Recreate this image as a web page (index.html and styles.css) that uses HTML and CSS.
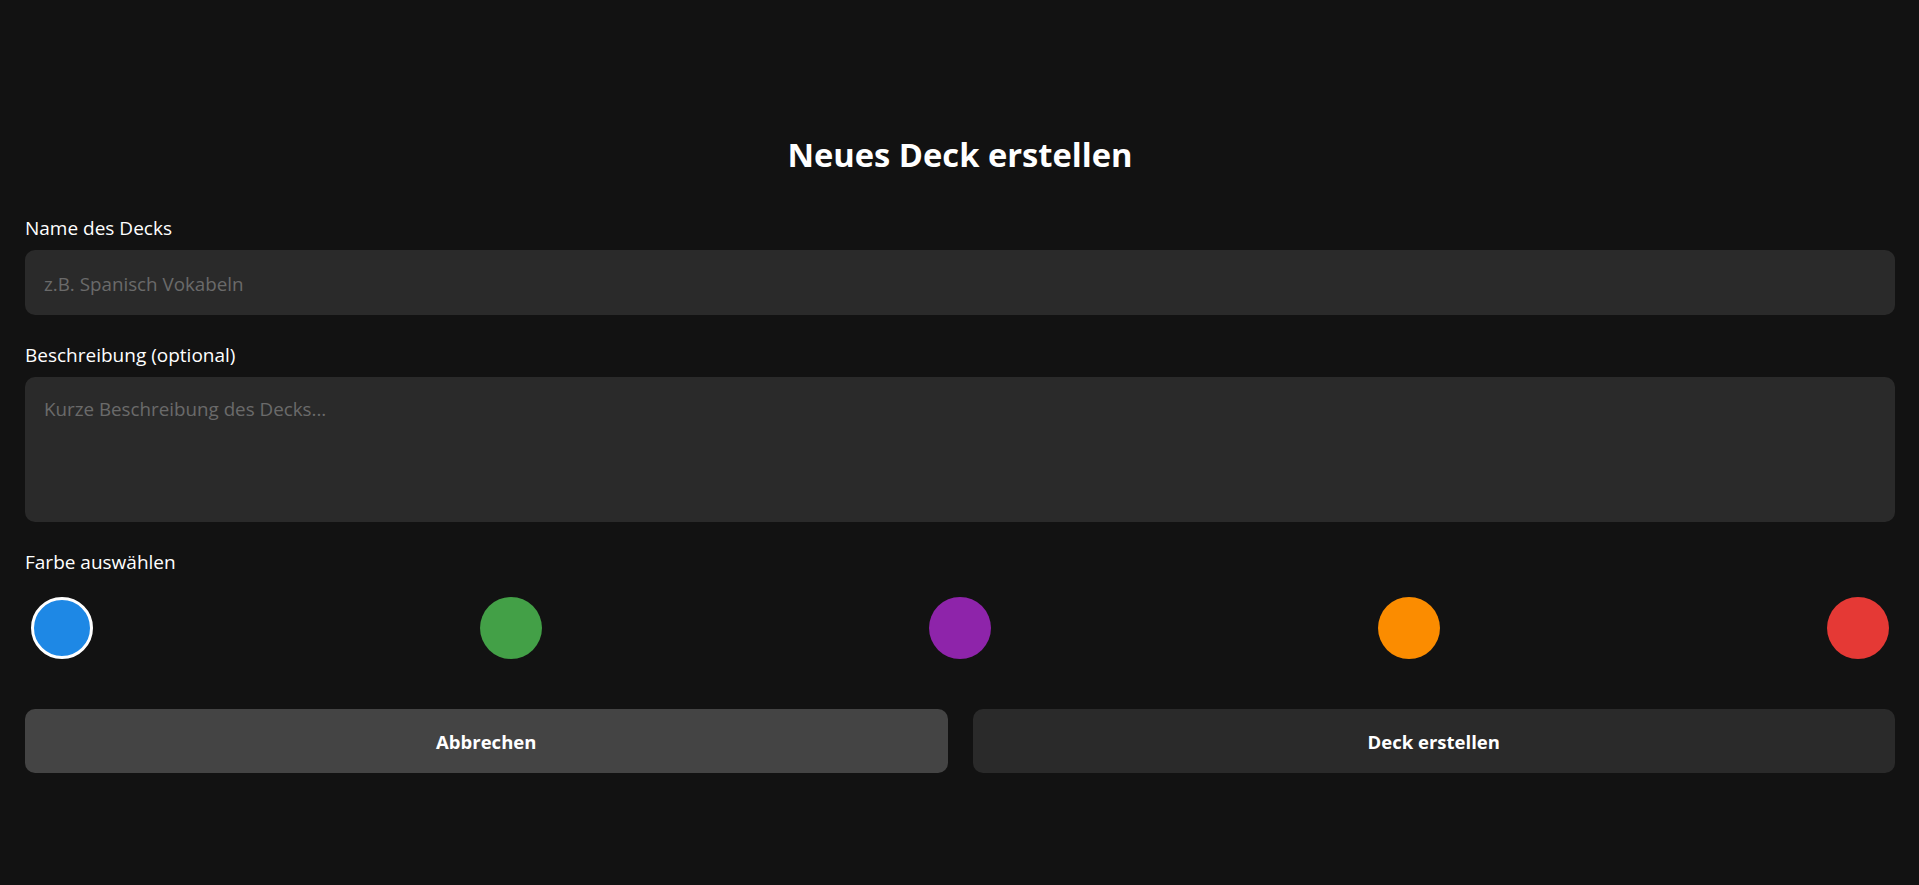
FILE: index.html
```html
<!DOCTYPE html>
<html lang="de">
<head>
<meta charset="utf-8">
<title>Neues Deck erstellen</title>
<link rel="stylesheet" href="styles.css">
</head>
<body>
<main class="screen">
  <h1 class="title">Neues Deck erstellen</h1>

  <label class="label label-first" for="deck-name">Name des Decks</label>
  <input class="field" id="deck-name" type="text" placeholder="z.B. Spanisch Vokabeln">

  <label class="label" for="deck-desc">Beschreibung (optional)</label>
  <textarea class="field area" id="deck-desc" placeholder="Kurze Beschreibung des Decks..."></textarea>

  <div class="label">Farbe auswählen</div>
  <div class="colors">
    <span class="swatch blue selected"></span>
    <span class="swatch green"></span>
    <span class="swatch purple"></span>
    <span class="swatch orange"></span>
    <span class="swatch red"></span>
  </div>

  <div class="actions">
    <button class="btn btn-cancel" type="button">Abbrechen</button>
    <button class="btn btn-create" type="button">Deck erstellen</button>
  </div>
</main>
</body>
</html>
```

FILE: styles.css
```css
* { box-sizing: border-box; }

html, body {
  margin: 0;
  background: #121212;
  height: 100%;
}

body {
  font-family: "Open Sans", "Noto Sans", "Liberation Sans", sans-serif;
  color: #ffffff;
}

.screen {
  display: flex;
  flex-direction: column;
  padding: 135px 24px 0 25px;
}

.title {
  margin: 0;
  font-size: 32.7px;
  line-height: 40px;
  font-weight: 700;
  text-align: center;
  color: #ffffff;
}

.label {
  display: block;
  margin: 28px 0 10px;
  font-size: 19px;
  line-height: 24px;
  font-weight: 400;
  color: #ffffff;
}

.label-first {
  margin-top: 41px;
}

.field {
  display: block;
  width: 100%;
  height: 65px;
  margin: 0;
  padding: 3px 19px 0;
  border: none;
  border-radius: 10px;
  background: #2a2a2a;
  color: #ffffff;
  font-family: inherit;
  font-size: 18.8px;
  line-height: 24px;
  outline: none;
}

.field::placeholder {
  color: #6a6a6a;
  opacity: 1;
}

.area {
  height: 145px;
  padding: 20px 19px;
  resize: none;
}

.colors {
  display: flex;
  justify-content: space-between;
  margin-top: 13px;
}

.swatch {
  width: 62px;
  height: 62px;
  margin: 0 6px;
  border-radius: 50%;
}

.swatch.selected {
  border: 3px solid #ffffff;
}

.blue { background: #1e88e5; }
.green { background: #43a047; }
.purple { background: #8e24aa; }
.orange { background: #fb8c00; }
.red { background: #e53935; }

.actions {
  display: flex;
  gap: 25px;
  margin-top: 50px;
}

.btn {
  flex: 1;
  height: 64px;
  padding: 2px 0 0;
  border: none;
  border-radius: 10px;
  color: #ffffff;
  font-family: inherit;
  font-size: 18.5px;
  font-weight: 700;
  line-height: 24px;
  cursor: pointer;
}

.btn-cancel { background: #444444; }
.btn-create { background: #2a2a2a; }
```
